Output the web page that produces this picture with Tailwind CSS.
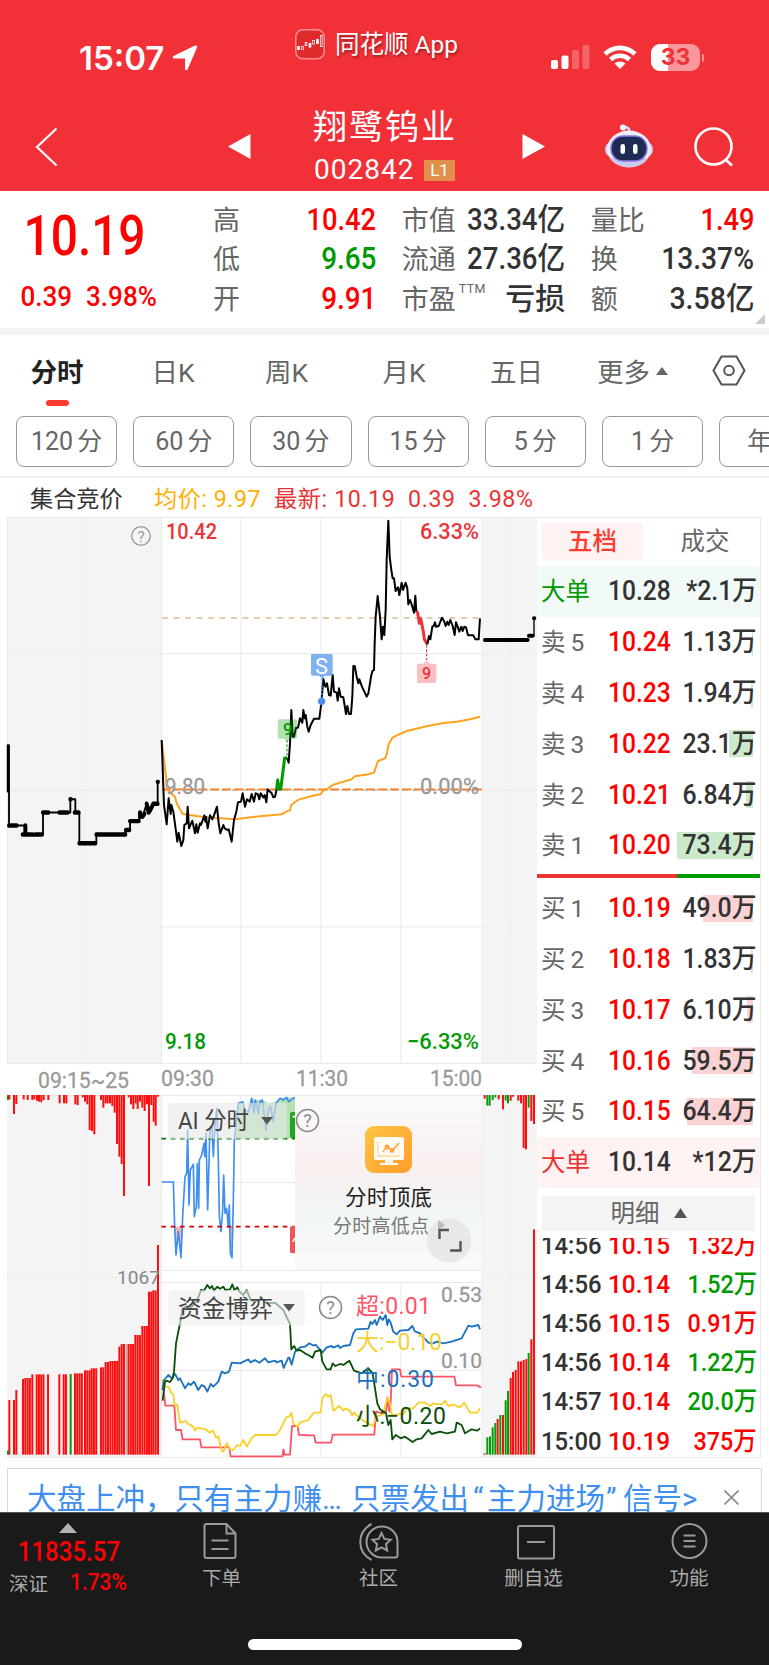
<!DOCTYPE html>
<html lang="zh-CN">
<head>
    <meta charset="UTF-8">
    <meta name="viewport" content="width=device-width, initial-scale=1.0">
    <title>翔鹭钨业 002842</title>
    <script src="https://cdn.jsdelivr.net/npm/@tailwindcss/browser@4"></script>
</head>
<body class="bg-white text-[#333] w-[769px] h-[1665px] overflow-hidden [font-family:Roboto,'Noto_Sans_CJK_SC',sans-serif]">

    <header class="h-[191px] bg-[#f23037] text-white overflow-hidden">
        <!-- status bar -->
        <div class="h-[96px] flex items-start">
            <div class="ml-[79px] mt-[38px] w-[88px] text-[33px] leading-[40px] font-semibold [font-family:Inter,sans-serif]">15:07</div>
            <svg class="ml-[5px] mt-[45px]" width="26" height="26" viewBox="0 0 26 26" fill="#fff"><path d="M23 .6c1.500-.5 2.600.6 2 2L15.800 24c-.8 1.800-2.800 1.500-2.800-.4V13.600H2.400c-2 0-2.200-2-.4-2.800z"/></svg>
            <svg class="ml-[97px] mt-[29px]" width="30" height="31" viewBox="0 0 30 31" fill="none" stroke="#fff">
                <rect x=".8" y=".8" width="28.400" height="29" rx="7" fill="#df2b2c" stroke="#f98e90" stroke-width="1.500"/>
                <path d="M3.500 17v4M15 14v4.500M22.500 10v5" stroke-width="2.600"/>
                <path d="M7.500 17v4M11 13v4M18.500 11v4.500M26.300 6v12" stroke-width="2.400"/>
                <path d="M7.500 17.800v2.400M11 13.800v2.400M18.500 11.800v2.900M26.300 7v10" stroke="#df2b2c" stroke-width="1"/>
            </svg>
            <div class="ml-[10px] mt-[28px] w-[126px] whitespace-nowrap text-[24.5px] leading-[34px] [text-shadow:1px_2px_2px_rgba(0,0,0,.35)]">同花顺 App</div>
            <svg class="ml-[90px] mt-[45px]" width="39" height="25" viewBox="0 0 39 25" fill="#fff"><rect y="15" width="7" height="9" rx="2"/><rect x="10.500" y="10.500" width="7" height="13.500" rx="2"/><rect x="21" y="5" width="7" height="19" rx="2" opacity=".25"/><rect x="31.500" y="0" width="7" height="24" rx="2" opacity=".25"/></svg>
            <svg class="ml-[13px] mt-[45px]" width="34" height="25" viewBox="0 0 34 25" fill="none" stroke="#fff" stroke-width="4.600"><path d="M2 9C10.500 .8 23.500 .8 32 9"/><path d="M7.500 14.500c5.500-5 13.500-5 19 0"/><path d="M11.500 18.500c3-2.800 8-2.800 11 0l-5.500 5.500z" fill="#fff" stroke="none"/></svg>
            <div class="relative ml-[14px] mt-[44px] w-[49px] h-[27px] rounded-[9px] bg-[#f9979b] overflow-hidden text-center">
                <div class="absolute left-0 top-0 w-[17px] h-full bg-white"></div>
                <span class="relative text-[#f23037] text-[23px] leading-[27px] font-bold [font-family:Inter,sans-serif]">33</span>
            </div>
            <div class="mt-[54px] ml-[2px] w-[2px] h-[8px] rounded-r bg-[#f9979b]"></div>
        </div>
        <!-- stock title -->
        <div class="h-[95px] flex items-start">
            <svg class="ml-[35px] mt-[31px]" width="23" height="40" viewBox="0 0 23 40" fill="none" stroke="#fff" stroke-width="2.200"><path d="M21.500 1.500L2 20l19.500 18.500"/></svg>
            <svg class="ml-[170px] mt-[38px]" width="23" height="25" fill="#fff"><path d="M22.500 0v25L0 12.500z"/></svg>
            <div class="ml-[62px] mt-[6px] w-[150px]">
                <div class="whitespace-nowrap text-[34px] leading-[50px] tracking-[2px]">翔鹭钨业</div>
                <div class="flex items-center h-[36px] pl-[1px]">
                    <span class="w-[110px] text-[28px] leading-[36px] tracking-[1px]">002842</span>
                    <span class="w-[31px] h-[21px] bg-[#e18f4b] text-center text-[17px] leading-[21px]">L1</span>
                </div>
            </div>
            <svg class="ml-[59px] mt-[38px]" width="23" height="25" fill="#fff"><path d="M.5 0v25L23 12.500z"/></svg>
            <svg class="ml-[60px] mt-[28px]" width="48" height="45" viewBox="0 0 48 45">
                <path d="M24 9c1-5-1-6-6-6" fill="none" stroke="#d9dcf4" stroke-width="2.500"/><circle cx="18" cy="3.500" r="3" fill="#f2f2fb"/>
                <rect x="0" y="18" width="48" height="15" rx="7" fill="#c9cbeb"/>
                <ellipse cx="24" cy="25" rx="22" ry="18.500" fill="#eeeefa"/>
                <path d="M5 34c6 12 32 12 38 0z" fill="#c7caea"/>
                <rect x="6" y="12" width="36" height="25" rx="12" fill="#1e2b52" stroke="#8b7be6" stroke-width="1.500"/>
                <rect x="15.500" y="20" width="4.500" height="10" rx="2.200" fill="#fff"/><rect x="28" y="20" width="4.500" height="10" rx="2.200" fill="#fff"/>
            </svg>
            <svg class="ml-[40px] mt-[31px]" width="42" height="41" viewBox="0 0 42 41" fill="none" stroke="#fff" stroke-width="2.600"><circle cx="20.500" cy="19.500" r="18"/><path d="M33 33l6 5.500"/></svg>
        </div>
    </header>

    <!-- quote summary -->
    <section class="h-[144px] border-b-[7px] border-[#f4f4f4] flex relative">
        <div class="w-[213px] text-[#ff0000] font-medium">
            <div class="origin-left scale-x-[.87] pl-[27px] mt-[11px] text-[55px] leading-[68px] whitespace-nowrap">10.19</div>
            <div class="origin-left scale-x-[.93] pl-[22px] mt-[9px] flex gap-[15px] text-[28px] leading-[36px]"><span>0.39</span><span>3.98%</span></div>
        </div>
        <div class="grid grid-cols-3 gap-x-[25.5px] w-[541px] h-[118px] mt-[9px] auto-rows-[39.3px] items-center text-[27px]">
            <div class="flex justify-between items-center leading-[39px]"><span class="text-[#666] relative top-[2px]">高</span><b class="font-medium text-[31px] text-[#ff0000] origin-right scale-x-[.88]">10.42</b></div>
            <div class="flex justify-between items-center leading-[39px]"><span class="text-[#666] relative top-[2px]">市值</span><b class="-ml-3 font-medium text-[31px] origin-right scale-x-[.89] whitespace-nowrap">33.34亿</b></div>
            <div class="flex justify-between items-center leading-[39px]"><span class="text-[#666] relative top-[2px]">量比</span><b class="font-medium text-[31px] text-[#ff0000] origin-right scale-x-[.88]">1.49</b></div>
            <div class="flex justify-between items-center leading-[39px]"><span class="text-[#666] relative top-[2px]">低</span><b class="font-medium text-[31px] text-[#009900] origin-right scale-x-[.9]">9.65</b></div>
            <div class="flex justify-between items-center leading-[39px]"><span class="text-[#666] relative top-[2px]">流通</span><b class="-ml-3 font-medium text-[31px] origin-right scale-x-[.89] whitespace-nowrap">27.36亿</b></div>
            <div class="flex justify-between items-center leading-[39px]"><span class="text-[#666] relative top-[2px]">换</span><b class="font-medium text-[31px] origin-right scale-x-[.91]">13.37%</b></div>
            <div class="flex justify-between items-center leading-[39px]"><span class="text-[#666] relative top-[2px]">开</span><b class="font-medium text-[31px] text-[#ff0000] origin-right scale-x-[.9]">9.91</b></div>
            <div class="flex justify-between items-center leading-[39px]"><span class="text-[#666] relative top-[2px] whitespace-nowrap">市盈<sup class="text-[12.5px] -top-[16px] ml-[3px] tracking-wide">TTM</sup></span><b class="font-medium text-[30px] whitespace-nowrap">亏损</b></div>
            <div class="flex justify-between items-center leading-[39px]"><span class="text-[#666] relative top-[2px]">额</span><b class="font-medium text-[31px] origin-right scale-x-[.92] whitespace-nowrap">3.58亿</b></div>
        </div>
        <svg class="absolute right-[4px] bottom-[4px]" width="10" height="10" fill="#ccc"><path d="M10 0v10H0z"/></svg>
    </section>

    <!-- period tabs -->
    <nav class="h-[81px] flex text-[26.5px] leading-[75px] text-[#666] text-center">
        <div class="relative w-[114px] font-bold text-[#222]">分时<i class="absolute left-[46px] top-[65px] w-[23px] h-[6px] rounded-full bg-[#ff3b30]"></i></div>
        <div class="w-[118px]">日K</div>
        <div class="w-[109px]">周K</div>
        <div class="w-[126px]">月K</div>
        <div class="w-[99px]">五日</div>
        <div class="ml-[31px] w-[53px]">更多</div>
        <svg class="ml-[6px] mt-[32px]" width="12" height="8" fill="#666"><path d="M6 0l6 8H0z"/></svg>
        <svg class="ml-[44px] mt-[20px]" width="34" height="31" viewBox="0 0 34 31" fill="none" stroke="#555" stroke-width="2"><path d="M9.500 1.500h15L32.500 15.500l-8 14h-15l-8-14z"/><circle cx="17" cy="15.500" r="4.800"/></svg>
    </nav>
    <div class="h-[62px] pl-4 flex gap-4 border-b-2 border-[#f0f0f0] overflow-hidden text-[25px] leading-[50px] [word-spacing:-2px] text-[#666] text-center">
        <div class="shrink-0 w-[101.2px] h-[51px] border border-[#999] rounded-lg">120 分</div>
        <div class="shrink-0 w-[101.2px] h-[51px] border border-[#999] rounded-lg">60 分</div>
        <div class="shrink-0 w-[101.2px] h-[51px] border border-[#999] rounded-lg">30 分</div>
        <div class="shrink-0 w-[101.2px] h-[51px] border border-[#999] rounded-lg">15 分</div>
        <div class="shrink-0 w-[101.2px] h-[51px] border border-[#999] rounded-lg">5 分</div>
        <div class="shrink-0 w-[101.2px] h-[51px] border border-[#999] rounded-lg">1 分</div>
        <div class="shrink-0 w-[101.2px] h-[51px] border border-[#999] rounded-lg pl-[27px] text-left">年</div>
    </div>
    <div class="h-[39px] flex text-[23.2px] leading-[43px] whitespace-pre">
        <span class="ml-[30px] w-[124px]">集合竞价</span>
        <span class="w-[120px] text-[#ffb000] tracking-[.5px]">均价: 9.97</span>
        <span class="text-[#eb3333] tracking-[.6px]">最新: 10.19  0.39  3.98%</span>
    </div>

    <main class="h-[944px] flex">
        <!-- charts; user units are page pixels -->
        <svg class="shrink-0" width="537" height="944" viewBox="0 517 537 944" font-size="21">
            <defs>
                <linearGradient id="tipBg" x1="0" y1="0" x2="0" y2="1"><stop offset="0" stop-color="#fafafa"/><stop offset=".42" stop-color="#f9efef"/><stop offset=".68" stop-color="#f1f6f5"/><stop offset="1" stop-color="#fafafa"/></linearGradient>
                <linearGradient id="tipIcon" x1="0" y1="0" x2="1" y2="1"><stop offset="0" stop-color="#ffc543"/><stop offset="1" stop-color="#ff9c2b"/></linearGradient>
            </defs>
            <path fill="#f4f4f4" d="M7 517h154v547H7zM482 517h55v547h-55zM7 1095h154v362H7zM482 1095h55v362h-55z"/>
            <path stroke="#e9e9e9" fill="none" d="M7 517.500H537M7 1063.500H537M161.500 517V1064M241 517V1064M321 517V1064M401 517V1064M482 517V1064M161 653.500H482M7 790.500H537M161 927H482M7.500 517V1064M161 1095.500H482M161 1182.500H482M161 1270.500H482M161 1282.500H482M161 1370.500H482M7 1457.500H537M161.500 1095V1457M241 1095V1270M241 1283V1457M321 1283V1457M401 1283V1457M482 1095V1457M7 1095.500H161"/>
            <path stroke="#e6e6e6" fill="none" stroke-dasharray="2 2" d="M85 517V1064M510 517V1064M7 654.500H161M7 928H161M482 654.500H537M482 928H537M85 1095V1457M510 1095V1457M7 1277.500H161M482 1277.500H537"/>

            <path stroke="#d9bd92" stroke-dasharray="6 5.500" d="M162 618H482" stroke-width="1.300"/>
            <path stroke="#aaa" stroke-dasharray="6 4" d="M162 790H482"/>
            <path stroke="#ff7f1e" stroke-dasharray="9 3" d="M162 789.300H482" stroke-width="1.800"/>

            <!-- call auction -->
            <g transform="translate(0 510) scale(.33333 .37037)" fill="none" stroke="#000" stroke-linejoin="round" stroke-linecap="round">
                <path stroke-width="5.500" d="M23 760V635h4V852H75V876H129V817H211V781H226V817H238V900H289V876H376V864H390V840H418V817L428 828 440 793 448 817 460 793H473V734"/>
                <path stroke-width="12" d="M27 852H50M68 876H98M76 852v20M106 876H126M129 817H145M178 817H203M211 781h1M224 817H236M238 900H286M289 876H376M378 864H388M390 840H416M420 817v12M428 828l5-8M440 793l6 24M450 812l10-19H473M473 734h1"/>
            </g>

            <!-- intraday price and average -->
            <g transform="translate(150 510) scale(.33333)" fill="none" stroke-width="6" stroke-linejoin="round">
                <path stroke="#ffa31f" d="M35 690L48 800 50 838 75 860 80 880 98 912 155 920 190 923 255 928 315 920 395 913 408 905 420 901 424 885 440 872 455 866 495 856 512 853 518 843 535 835 548 825 580 815 605 808 615 799 655 793 672 788 684 753 705 745 711 730 715 705 728 682 770 663 830 649 880 639 920 635 960 628 991 620"/>
                <path stroke="#000" d="M35 690L38 770 40 830 42 885 50 943 56 865 62 912 64 885 70 905 82 995 86 968 94 1008 100 990 103 945 110 940 113 890 117 955 127 932 135 970 139 943 143 968 150 940 153 945 163 916 166 935 168 920 173 955 180 916 187 928 192 916 201 890 206 940 211 970 220 945 224 955 232 960 236 958 245 995 252 930 259 905 264 877 273 875 278 850 285 890 291 868 299 875 305 852 312 875 317 850 323 852 328 868 332 850 340 862 344 855 349 877 353 838 365 850 370 862 375 860 380 838"/>
                <path stroke="#090" stroke-width="9" d="M380 838L383 810 388 838 392 838 404 744 412 744"/>
                <path stroke="#000" d="M412 744L416 758 420 700 424 600 428 680 432 680 438 653 444 653 450 625 457 638 460 600 464 625 467 615 472 650 476 665 482 645 492 626 508 626 514 580 520 507 526 530 531 520 537 555 542 557 548 495 552 545 560 548 563 572 567 535 572 560 580 562 588 612 592 588 597 612 603 612 607 560 610 468 614 468 620 500 625 520 628 508 636 530 650 560 655 550 664 495 668 482 672 480 674 400 677 320 683 258 690 320 695 388 699 350 703 375 707 300 710 150 715 32 719 140 724 180 728 205 732 205 737 243 744 232 748 255 755 218 759 240 767 218 772 235 775 283 780 270 785 283 792 308 796 257 799 305"/>
                <path stroke="#eb3338" stroke-width="9" d="M799 305L803 308 808 340 812 325 820 365 823 388 832 403"/>
                <path stroke="#000" d="M832 403L837 378 841 388 847 350 851 348 855 337 858 350 866 348 876 323 882 333 887 348 892 335 896 345 901 330 908 348 914 375 918 337 923 350 928 365 934 350 938 363 943 350 948 352 954 376 970 376 976 388 986 388 990 325"/>
                <path stroke="#000" stroke-width="4" d="M1135 377H1152V325"/>
                <path stroke="#000" stroke-width="12" stroke-linecap="round" d="M1005 390H1133M1137 377H1148M1152 325h1"/>
                <!-- signal flags -->
                <path stroke="#090" stroke-width="3" stroke-dasharray="8 5" d="M411 690V742"/>
                <path fill="#009a00" fill-opacity=".3" d="M388 628h48q5 0 5 5v48q0 5-5 5h-15l-9 9-9-9h-15q-5 0-5-5v-48q0-5 5-5z"/>
                <path stroke="#3b8bea" stroke-width="4" stroke-dasharray="6 5" d="M516 505V570"/>
                <circle cx="515" cy="574" r="11" fill="#4a90e8"/>
                <path fill="#7fb0f0" d="M488 432h55q5 0 5 5v55q0 5-5 5h-18l-9 9-9-9h-19q-5 0-5-5v-55q0-5 5-5z"/>
                <path stroke="#c22" stroke-width="3" stroke-dasharray="8 5" d="M830 405V450"/>
                <path fill="#f9bfc3" d="M806 461h15l9-11 9 11h15q5 0 5 5v48q0 5-5 5h-48q-5 0-5-5v-48q0-5 5-5z"/>
            </g>
            <text x="283" y="735" font-size="17" fill="#090" font-weight="500">9</text>
            <text x="315" y="673.500" font-size="22" fill="#fff" textLength="13" lengthAdjust="spacingAndGlyphs">S</text>
            <text x="422" y="679" font-size="16" fill="#eb3338" font-weight="500">9</text>

            <g font-weight="500">
                <text x="166" y="539" fill="#eb3338" font-size="22" textLength="51" lengthAdjust="spacingAndGlyphs">10.42</text>
                <text x="420" y="539" fill="#eb3338" font-size="22" textLength="59" lengthAdjust="spacingAndGlyphs">6.33%</text>
                <text x="165" y="1049" fill="#090" font-size="22" textLength="41" lengthAdjust="spacingAndGlyphs">9.18</text>
                <text x="407" y="1049" fill="#090" font-size="22" textLength="72" lengthAdjust="spacingAndGlyphs">−6.33%</text>
            </g>
            <g fill="#999" font-size="22" stroke="#999" stroke-width=".3">
                <text x="165" y="794" textLength="40" lengthAdjust="spacingAndGlyphs">9.80</text>
                <text x="420" y="794" textLength="59" lengthAdjust="spacingAndGlyphs">0.00%</text>
                <text x="38" y="1088" textLength="91" lengthAdjust="spacingAndGlyphs">09:15~25</text>
                <text x="161" y="1086" textLength="53" lengthAdjust="spacingAndGlyphs">09:30</text>
                <text x="296" y="1086" textLength="52" lengthAdjust="spacingAndGlyphs">11:30</text>
                <text x="430" y="1086" textLength="52" lengthAdjust="spacingAndGlyphs">15:00</text>
            </g>
            <circle cx="141" cy="536" r="9.300" fill="none" stroke="#999" stroke-width="1.300"/>
            <text x="141" y="541.500" font-size="15" fill="#999" text-anchor="middle">?</text>

            <g id="bars"></g>
            <text x="117" y="1284" fill="#888" font-size="19" textLength="43" lengthAdjust="spacingAndGlyphs">1067</text>

            <!-- AI indicator -->
            <g transform="translate(0 1060) scale(.33333)" fill="none" stroke-width="5" stroke-linejoin="round">
                <path fill="#b4e1b4" d="M703 236L708 190 715 130 728 125 735 150 745 155 755 115 766 120 787 120 805 130 828 125 840 115 885 110V236z"/>
                <path fill="#f6b4b8" d="M523 500H549L543 590 535 515 528 585zM687 500H701L696 590 691 580z"/>
                <path stroke="#3f8fee" d="M485 366L520 366 524 500 528 585 535 515 543 593 548 470 555 350 560 340 563 210 567 435 571 330 580 313 583 470 589 440 592 310 596 445 598 300 605 285 612 250 614 290 618 220 623 450 630 200 636 200 640 290 645 190 651 145 655 300 658 470 663 515 668 450 671 345 675 460 680 445 685 500 688 435 691 580 696 593 700 420 703 240 708 190 715 130 728 125 735 150 745 155 755 115 762 160 766 120 775 160 780 125 787 120 792 160 798 210 805 150 812 140 820 185 828 130 840 115 850 120 860 112 866 125 885 112"/>
                <path stroke="#007a00" stroke-width="5" stroke-dasharray="14 14" d="M484 236H885"/>
                <path stroke="#d00000" stroke-width="5" stroke-dasharray="14 14" d="M484 500H885"/>
                <path fill="#1fa51f" d="M885 156h-9q-6 0-6 6v66q0 6 6 6h9z"/>
                <path fill="#f0545a" d="M885 498h-9q-6 0-6 6v70q0 6 6 6h9z"/>
                <path stroke="#fff" d="M878 172l7-4M878 545l7-10"/>
            </g>
            <rect x="295" y="1096" width="187" height="174" fill="url(#tipBg)"/>
            <rect x="365" y="1126" width="47" height="47" rx="9" fill="url(#tipIcon)"/>
            <g fill="none" stroke="#ff9d2e" stroke-width="1.300"><rect x="374" y="1137" width="30" height="23" rx="2" fill="#fffaf0" stroke="none"/><path d="M385 1160h8v3h5v2h-18v-2h5z" fill="#fffaf0" stroke="none"/><path d="M378 1141v15h22" stroke="#ffd9a0"/><path d="M383 1152l4-6 5 5 7-8"/><circle cx="387" cy="1147" r="1.800"/><circle cx="392" cy="1150.500" r="1.800"/></g>
            <text x="345" y="1204.500" font-size="21.500" fill="#222" textLength="87">分时顶底</text>
            <text x="333" y="1233" font-size="19" fill="#777" textLength="96">分时高低点</text>
            <circle cx="449" cy="1240.500" r="22.300" fill="#e8e8e8"/>
            <path d="M438 1220v10l7-5z" fill="#bbb"/>
            <path d="M439.500 1239v-9H449M450 1250.500h10.500V1241" fill="none" stroke="#555" stroke-width="2.400"/>
            <rect x="168" y="1103" width="119" height="36" rx="4" fill="#e8e8e8" fill-opacity=".6"/>
            <text x="178" y="1129" font-size="24" fill="#444" textLength="71" lengthAdjust="spacingAndGlyphs">AI 分时</text>
            <path d="M261 1117h12l-6 7.500z" fill="#555"/>
            <circle cx="307.500" cy="1120.500" r="11" fill="none" stroke="#888" stroke-width="1.500"/>
            <text x="307.500" y="1127" font-size="18" fill="#888" text-anchor="middle">?</text>

            <!-- capital flow -->
            <g transform="translate(0 1060) scale(.33333)" fill="none" stroke-width="5.500" stroke-linejoin="round">
                <path stroke="#ff5468" d="M490 985L496 1037 523 1037 528 1110 543 1110 548 1138 600 1138 604 1162 688 1162 692 1189 848 1189 850 1168 854 1184 870 1184 876 1098 893 1098 897 1125 942 1126 947 1148 993 1148 998 1124 1123 1124 1128 1055 1148 1060 1158 1055 1162 1012 1168 1055 1172 1030 1176 928 1200 928 1204 950 1363 950 1368 976 1430 976 1443 982"/>
                <path stroke="#fad02c" d="M487 958L490 980 505 980 515 1000 520 1003 524 1035 532 1035 540 1088 558 1083 565 1092 580 1100 585 1112 592 1103 618 1108 628 1118 640 1112 648 1133 655 1130 665 1172 670 1175 680 1150 690 1168 700 1170 712 1155 720 1158 730 1140 740 1160 755 1135 765 1125 828 1125 840 1110 850 1090 860 1070 868 1070 874 1058 880 1090 892 1100 900 1088 925 1080 942 1058 962 1058 967 1015 977 1002 985 1010 992 1004 1000 1052 1018 1038 1030 1052 1036 1045 1050 1052 1056 1066 1062 1058 1080 1075 1095 1085 1118 1098 1130 1070 1150 1062 1162 1012 1170 1030 1175 1065 1210 1062 1220 1045 1240 1045 1255 1028 1275 1028 1290 1038 1300 1030 1325 1034 1335 1022 1345 1038 1360 1034 1380 1042 1393 1028 1410 1058 1432 1058 1440 1045"/>
                <path stroke="#1b72c0" d="M487 990L492 960 505 945 515 955 525 942 535 960 540 955 545 965 555 985 565 970 572 975 582 965 595 990 605 975 614 980 622 995 632 972 640 980 655 965 665 935 675 940 687 935 695 908 720 910 745 898 752 907 765 900 778 908 795 895 805 907 825 902 830 907 845 902 851 924 865 893 868 893 875 914 885 875 900 862 915 860 928 850 938 856 948 855 967 878 980 862 995 858 1000 863 1015 856 1020 864 1030 858 1050 855 1060 820 1068 808 1105 806 1112 785 1117 792 1125 780 1130 795 1140 770 1148 780 1157 765 1162 795 1166 778 1172 788 1180 815 1190 823 1200 812 1225 810 1237 798 1245 814 1260 820 1285 848 1300 850 1310 845 1330 850 1355 845 1385 835 1405 797 1415 800 1435 795 1440 808"/>
                <path stroke="#0a4f0a" d="M488 1022L495 965 500 962 510 966 518 955 522 935 528 850 540 790 548 745 560 740 570 745 580 735 595 712 603 690 612 692 622 675 630 685 636 678 642 692 652 680 660 686 670 680 676 690 690 688 697 673 703 690 712 682 718 695 730 705 740 690 752 720 765 725 785 715 800 730 825 728 850 750 870 792 874 868 882 858 890 872 900 870 915 880 925 885 938 893 945 875 962 870 967 905 980 928 992 928 998 910 1006 918 1020 912 1030 915 1048 902 1062 932 1085 940 1105 925 1118 940 1125 985 1132 1030 1140 1048 1158 1060 1165 1095 1172 1080 1177 1138 1187 1125 1202 1135 1215 1130 1238 1146 1250 1138 1265 1135 1285 1110 1295 1122 1320 1115 1340 1120 1365 1115 1370 1088 1385 1095 1395 1120 1415 1108 1432 1112 1440 1105"/>
            </g>
            <rect x="168" y="1290" width="137" height="35.500" rx="4" fill="#eee" fill-opacity=".6"/>
            <text x="178" y="1317" font-size="24" fill="#444" textLength="95" lengthAdjust="spacingAndGlyphs">资金博弈</text>
            <path d="M283 1304h12l-6 7.500z" fill="#555"/>
            <circle cx="330.500" cy="1307.500" r="11" fill="none" stroke="#888" stroke-width="1.500"/>
            <text x="330.500" y="1314" font-size="18" fill="#888" text-anchor="middle">?</text>
            <g fill="#999" stroke="#999" stroke-width=".3"><text x="441" y="1302" textLength="41" lengthAdjust="spacingAndGlyphs">0.53</text><text x="441" y="1368" textLength="41" lengthAdjust="spacingAndGlyphs">0.10</text></g>
            <g font-size="23">
                <text x="356" y="1313.500" fill="#ff5468" textLength="75">超:0.01</text>
                <text x="356" y="1350" fill="#f8d030" textLength="86">大:−0.10</text>
                <text x="356" y="1387" fill="#1b72c0" textLength="78">中:0.30</text>
                <text x="356" y="1424" fill="#0a4f0a" textLength="90">小:−0.20</text>
            </g>
        </svg>

        <!-- order book -->
        <aside class="w-[224px] h-[941px] border-t border-r border-b border-[#e9e9e9] overflow-hidden">
            <div class="h-[48px] pt-[5px] pl-[5px] flex text-[24.5px] leading-[38px] text-center">
                <div class="w-[101px] h-[37px] rounded bg-[#fff2f2] text-[#ff3b30] font-medium">五档</div>
                <div class="ml-[13px] w-[98px] text-[#666]">成交</div>
            </div>
            <div id="sells"></div>
            <div class="flex h-1 mt-[3px] mb-[5px]"><div class="w-[140px] bg-[#eb3333]"></div><div class="flex-1 bg-[#009900]"></div></div>
            <div id="buys"></div>
            <div class="ml-[5px] mt-[8px] w-[213px] h-[35px] bg-[#f4f4f4] flex justify-center items-center gap-[14px] text-[24.5px] leading-[35px] text-[#666]">明细<svg width="13" height="10" fill="#555"><path d="M6.500 0L13 10H0z"/></svg></div>
            <div class="mt-[7px] h-[222px] overflow-hidden"><div id="ticks" class="-mt-[12.5px]"></div></div>
        </aside>
    </main>

    <div class="h-[51px] pt-[7px] px-[7px]">
        <div class="h-[44px] border border-b-0 border-[#d8d8d8] flex items-start pl-[19px] text-[29.5px] leading-[60px] text-[#3f8fee] whitespace-pre overflow-hidden">
            <span class="w-[324px]">大盘上冲，只有主力赚…</span><span class="w-[122px]">只票发出</span><span class="w-[14px]">“</span><span class="w-[119px]">主力进场</span><span class="w-[17px]">”</span><span class="w-[78px]">信号&gt;</span>
            <svg class="ml-[23px] mt-[21px]" width="15" height="15" stroke="#888" stroke-width="1.600"><path d="M.5.5l14 14M14.500.5l-14 14"/></svg>
        </div>
    </div>

    <footer class="relative h-[153px] bg-[#1a1a1a] border-t border-[#555] flex text-[19.5px] text-[#aaa] text-center">
        <div class="w-[144px] pt-[10px] text-left">
            <svg class="ml-[59px]" width="18" height="10" fill="#b3b3b3"><path d="M9 0l9 10H0z"/></svg>
            <div class="origin-left scale-x-[.89] pl-[20px] mt-[2px] text-[27px] leading-[34px] font-medium text-[#ff0000]">11835.57</div>
            <div class="flex pl-[9px] leading-[30px]"><span class="w-[61px] relative top-px">深证</span><span class="origin-left scale-x-[.91] text-[23px] leading-[28px] font-medium text-[#ff0000]">1.73%</span></div>
        </div>
        <div class="w-[155px] pt-[10px] flex flex-col items-center">
            <svg class="-ml-[4px]" width="34" height="36" viewBox="0 0 34 36" fill="none" stroke="#999" stroke-width="2"><path d="M1.500 3q0-2 2-2H23.500L32.500 10.500V33q0 2-2 2H3.500q-2 0-2-2zM23.500 1V10.500h9M8.500 17.500h17M8.500 26h17"/></svg>
            <span class="leading-[40px]">下单</span>
        </div>
        <div class="w-[159px] pt-[10px] flex flex-col items-center">
            <svg width="40" height="38" viewBox="0 0 40 38" fill="none" stroke="#999" stroke-width="2"><path d="M23 3.500a15.500 15.500 0 1 0 0 31H36.500q2 0 2-2V19A15.500 15.500 0 0 0 23 3.500z"/><path d="M12.500 1C-2.500 9-2.500 29 12.500 37"/><path d="M22.500 10l2.800 5.900 6.400.8-4.700 4.400 1.200 6.400-5.700-3.100-5.700 3.100 1.200-6.400-4.700-4.400 6.400-.8z"/></svg>
            <span class="leading-[36px]">社区</span>
        </div>
        <div class="w-[151px] pt-[12px] flex flex-col items-center">
            <svg class="ml-[4px]" width="38" height="35" viewBox="0 0 38 35" fill="none" stroke="#999" stroke-width="2"><rect x="1" y="1" width="36" height="32.500" rx="1.500"/><path d="M10 17h18"/></svg>
            <span class="leading-[38px]">删自选</span>
        </div>
        <div class="w-[160px] pt-[10px] flex flex-col items-center">
            <svg width="37" height="37" viewBox="0 0 37 37" fill="none" stroke="#999" stroke-width="2"><circle cx="18.500" cy="18" r="17"/><path d="M12.500 12.500h12M12.500 18h12M12.500 23.500h12"/></svg>
            <span class="leading-[38px]">功能</span>
        </div>
        <div class="absolute left-[248px] top-[126px] w-[274px] h-[11px] rounded-full bg-white"></div>
    </footer>

    <script>
        // label, price, volume, depth width, kind
        const sells = [
            ['大单', '10.28', '*2.1万', 0, 'green'],
            ['卖 5', '10.24', '1.13万', 1, ''],
            ['卖 4', '10.23', '1.94万', 2, ''],
            ['卖 3', '10.22', '23.1万', 24, ''],
            ['卖 2', '10.21', '6.84万', 7, ''],
            ['卖 1', '10.20', '73.4万', 76, '']
        ];
        const buys = [
            ['买 1', '10.19', '49.0万', 50, ''],
            ['买 2', '10.18', '1.83万', 2, ''],
            ['买 3', '10.17', '6.10万', 6, ''],
            ['买 4', '10.16', '59.5万', 61, ''],
            ['买 5', '10.15', '64.4万', 66, ''],
            ['大单', '10.14', '*12万', 0, 'red']
        ];

        function bookRow(row, depthClass) {
            const [label, price, volume, depth, kind] = row;
            let rowClass = '', labelClass = 'text-[#666]', priceClass = 'text-[#ff0000]';
            if (kind === 'green') { rowClass = 'bg-[#f1faf6]'; labelClass = 'text-[#009900]'; priceClass = ''; }
            if (kind === 'red') { rowClass = 'bg-[#fff2f2]'; labelClass = 'text-[#eb3333]'; priceClass = ''; }
            return `<div class="relative h-[50.8px] flex items-center pl-[4px] text-[27px] leading-[50px] font-medium ${rowClass}">
                <div class="absolute right-[7px] top-[12px] h-[27px] ${depthClass}" style="width:${depth}px"></div>
                <span class="relative top-px w-[67px] text-[24.5px] font-normal whitespace-nowrap [word-spacing:-1px] ${labelClass}">${label}</span>
                <span class="origin-left scale-x-[.91] ${priceClass}">${price}</span>
                <span class="absolute right-[3px] origin-right scale-x-[.92] whitespace-nowrap">${volume}</span>
            </div>`;
        }
        document.getElementById('sells').innerHTML = sells.map(r => bookRow(r, 'bg-[#cbeacb]')).join('');
        document.getElementById('buys').innerHTML = buys.map(r => bookRow(r, 'bg-[#fbd3d5]')).join('');

        const ticks = [
            ['14:56', '10.15', '1.32万', 1],
            ['14:56', '10.14', '1.52万', 0],
            ['14:56', '10.15', '0.91万', 1],
            ['14:56', '10.14', '1.22万', 0],
            ['14:57', '10.14', '20.0万', 0],
            ['15:00', '10.19', '375万', 1]
        ];
        document.getElementById('ticks').innerHTML = ticks.map(([time, price, volume, up]) =>
            `<div class="relative h-[39.1px] flex items-center pl-[4px] text-[26.5px] leading-[39px] font-medium">
                <span class="w-[67px] origin-left scale-x-[.9]">${time}</span>
                <span class="origin-left scale-x-[.92] text-[#ff0000]">${price}</span>
                <span class="absolute right-[3px] origin-right scale-x-[.88] whitespace-nowrap ${up ? 'text-[#ff0000]' : 'text-[#009900]'}">${volume}</span>
            </div>`).join('');

        // auction volume, one third of a pixel per unit: [from, to, top]
        const runs = [[25,31,1020],[39,45,1020],[46,51,990],[66,71,957],[73,92,954],[94,99,943],[107,133,943],[141,147,943],[175,180,943],[188,202,943],[222,250,940],[252,270,931],[272,291,925],[300,312,922],[314,325,906],[328,353,903],[355,360,860],[362,402,852],[403,422,825],[424,441,798],[444,456,695],[457,470,691],[471,476,555]];
        const drops = [[25,118],[39,162],[46,132],[68,118],[80,120],[94,120],[100,118],[108,122],[114,125],[121,127],[128,120],[142,120],[176,130],[189,130],[196,130],[223,133],[230,135],[245,112],[252,125],[259,133],[266,210],[273,213],[280,223],[300,120],[307,143],[314,130],[320,130],[327,130],[334,138],[341,158],[348,252],[355,290],[362,312],[369,408],[383,112],[390,133],[397,147],[404,130],[410,147],[417,125],[424,143],[431,153],[438,133],[444,378],[451,135],[458,185],[464,197],[471,110]];
        // closing auction: [x, top, up]
        const closing = [[613,1180,1],[621,1132,0],[629,1129,0],[637,1102,0],[645,1089,0],[652,1077,1],[660,1065,0],[668,1065,1],[676,1021,0],[683,993,0],[691,954,1],[698,936,1],[706,930,1],[714,904,1],[722,904,1],[730,900,1],[738,897,1],[745,879,0],[753,838,1],[761,508,1]];
        const closingDrops = [[613,116,1],[621,137,0],[628,137,0],[637,120,0],[645,112,0],[655,118,1],[668,148,1],[676,122,0],[683,130,0],[691,122,1],[698,110,1],[714,122,1],[722,130,1],[730,264,1],[737,268,1],[745,143,0],[753,183,1],[761,192,1]];

        const red = '#ff0d0d', green = '#0a9a0a';
        let bars = '';
        function bar(x, top, bottom, color) {
            bars += `<rect x="${(x / 3).toFixed(2)}" y="${(1060 + top / 3).toFixed(2)}" width="2" height="${((bottom - top) / 3).toFixed(2)}" fill="${color}"/>`;
        }
        runs.forEach(([from, to, top]) => {
            for (let x = from; x < to - 1; x += 6.85) bar(x, top, 1184, x > 373 && x < 380 ? '#bbb' : red);
        });
        bar(209, 942, 1184, green);
        bar(21, 1172, 1184, green);
        bar(21, 105, 120, green);
        drops.forEach(([x, bottom]) => bar(x, 105, bottom, red));
        closing.forEach(([x, top, up]) => bar(x + 838, top, 1184, up ? red : green));
        closingDrops.forEach(([x, bottom, up]) => bar(x + 838, 105, bottom, up ? red : green));
        document.getElementById('bars').innerHTML = bars;
    </script>
</body>
</html>
